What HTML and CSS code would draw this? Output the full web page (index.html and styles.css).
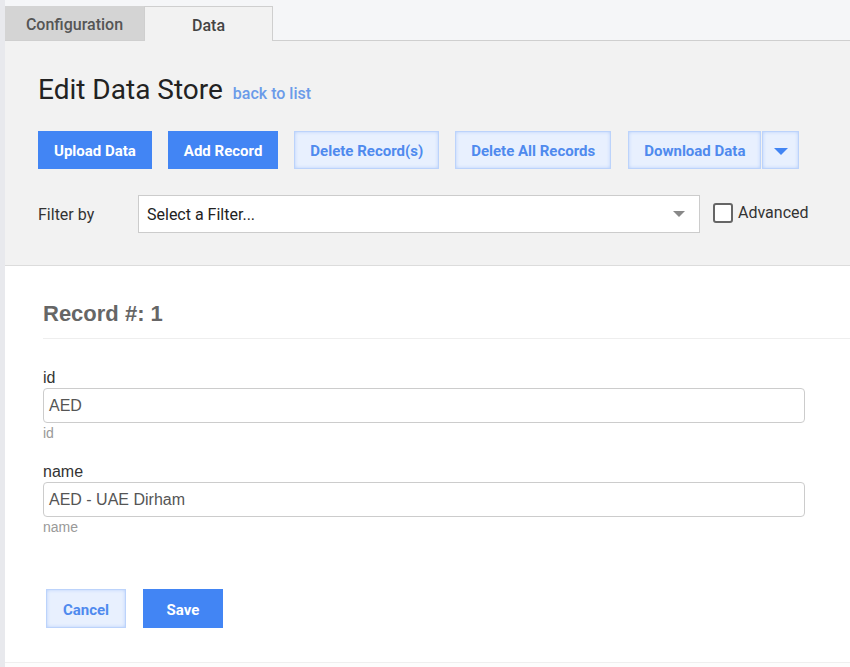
FILE: index.html
```html
<!DOCTYPE html>
<html>
<head>
<meta charset="utf-8">
<link rel="stylesheet" href="styles.css">
</head>
<body>
<div class="page">
  <div class="rail"></div>
  <div class="main">
    <div class="tabs">
      <div class="tab tab-off">Configuration</div>
      <div class="tab tab-on">Data</div>
    </div>
    <div class="header">
      <div class="title-row">
        <h1 class="title">Edit Data Store</h1>
        <a class="back">back to list</a>
      </div>
      <div class="actions">
        <button class="btn primary">Upload Data</button>
        <button class="btn primary">Add Record</button>
        <button class="btn secondary">Delete Record(s)</button>
        <button class="btn secondary">Delete All Records</button>
        <div class="split">
          <button class="btn secondary">Download Data</button>
          <button class="btn secondary caret-btn"><span class="caret blue"></span></button>
        </div>
      </div>
      <div class="filter-row">
        <span class="filter-label">Filter by</span>
        <div class="select">
          <span>Select a Filter...</span>
          <span class="caret gray"></span>
        </div>
        <label class="adv"><span class="box"></span><span>Advanced</span></label>
      </div>
    </div>
    <div class="record">
      <h2 class="record-title">Record #: 1</h2>
      <div class="form">
        <div class="field">
          <div class="label">id</div>
          <div class="input">AED</div>
          <div class="help">id</div>
        </div>
        <div class="field">
          <div class="label">name</div>
          <div class="input">AED - UAE Dirham</div>
          <div class="help">name</div>
        </div>
        <div class="form-actions">
          <button class="btn secondary small">Cancel</button>
          <button class="btn primary small">Save</button>
        </div>
      </div>
    </div>
  </div>
</div>
</body>
</html>
```

FILE: styles.css
```css
html, body {
  margin: 0;
  padding: 0;
  background: #fdfdfd;
}
.page {
  display: flex;
  min-height: 667px;
}
.rail {
  width: 5px;
  background: #e8e9ed;
  flex: none;
}
.main {
  flex: 1;
  display: flex;
  flex-direction: column;
}
.tabs {
  display: flex;
  padding-top: 6px;
  border-bottom: 1px solid #cfcfcf;
  height: 34px;
  background: #f5f6f8;
}
.tab {
  box-sizing: border-box;
  height: 35px;
  display: flex;
  align-items: center;
  justify-content: center;
  padding-top: 3px;
  font-family: Roboto, "Liberation Sans", sans-serif;
  font-size: 16px;
  font-weight: 500;
}
.tab-off {
  width: 139px;
  background: #d4d4d4;
  color: #555;
  height: 34px;
}
.tab-on {
  width: 129px;
  background: #f2f2f2;
  color: #444;
  border: 1px solid #cfcfcf;
  border-bottom: none;
}
.header {
  background: #f2f2f2;
  padding: 34px 0 32px 33px;
  border-bottom: 1px solid #dcdcdc;
}
.title-row {
  display: flex;
  align-items: baseline;
  gap: 10px;
}
.title {
  margin: 0;
  font-family: Roboto, "Liberation Sans", sans-serif;
  font-size: 28px;
  line-height: 30px;
  font-weight: 400;
  color: #222;
}
.back {
  font-family: Roboto, "Liberation Sans", sans-serif;
  font-size: 16px;
  font-weight: 500;
  color: #6b9be9;
}
.actions {
  display: flex;
  gap: 16px;
  margin-top: 26px;
}
.split {
  display: flex;
  gap: 1px;
  margin-left: 1px;
}
.btn {
  height: 38px;
  border: none;
  padding: 2px 16px 0;
  font-family: Roboto, "Liberation Sans", sans-serif;
  font-size: 15px;
  font-weight: 700;
  cursor: pointer;
}
.primary {
  background: #4285f4;
  color: #fff;
}
.secondary {
  background: #e8f0fe;
  color: #4f8aee;
  box-shadow: inset 0 0 0 1px #bcd3fb, inset 0 0 4px #9fc0fa;
}
.caret-btn {
  width: 37px;
  padding: 0;
  display: flex;
  align-items: center;
  justify-content: center;
}
.caret {
  width: 0;
  height: 0;
  border-left: 6px solid transparent;
  border-right: 6px solid transparent;
  border-top: 6px solid #888;
}
.caret.blue {
  border-left-width: 7px;
  border-right-width: 7px;
  border-top: 7px solid #4285f4;
  margin-top: 2px;
}
.filter-row {
  display: flex;
  align-items: center;
  margin-top: 26px;
  font-family: Roboto, "Liberation Sans", sans-serif;
  font-size: 16px;
  color: #333;
}
.filter-label {
  width: 100px;
  flex: none;
}
.select {
  box-sizing: border-box;
  width: 562px;
  height: 38px;
  background: #fff;
  border: 1px solid #cccccc;
  display: flex;
  align-items: center;
  justify-content: space-between;
  padding: 0 14px 0 8px;
  color: #222;
}
.adv {
  display: flex;
  align-items: center;
  margin-left: 13px;
  gap: 5px;
  margin-top: -3px;
}
.box {
  box-sizing: border-box;
  width: 20px;
  height: 20px;
  border: 2px solid #666;
  border-radius: 3px;
  background: #fff;
}
.record {
  background: #fff;
  padding: 35px 0 34px 38px;
  border-bottom: 1px solid #efefef;
}
.record-title {
  margin: 0;
  font-family: "Liberation Sans", Arial, sans-serif;
  font-size: 22px;
  line-height: 26px;
  font-weight: 700;
  color: #666;
  padding-bottom: 11px;
  border-bottom: 1px solid #eeeeee;
}
.form {
  width: 762px;
  padding-top: 29px;
  font-family: "Liberation Sans", Arial, sans-serif;
}
.field {
  margin-bottom: 19px;
}
.label {
  font-size: 16px;
  line-height: 20px;
  color: #333;
}
.input {
  box-sizing: border-box;
  height: 35px;
  border: 1px solid #cccccc;
  border-radius: 4px;
  padding: 0 5px;
  display: flex;
  align-items: center;
  font-size: 16px;
  color: #555;
}
.help {
  font-size: 14px;
  line-height: 20px;
  color: #999;
}
.form-actions {
  display: flex;
  gap: 17px;
  padding-left: 3px;
  margin-top: 52px;
}
.small {
  width: 80px;
  height: 39px;
  padding: 2px 0 0;
}
```
